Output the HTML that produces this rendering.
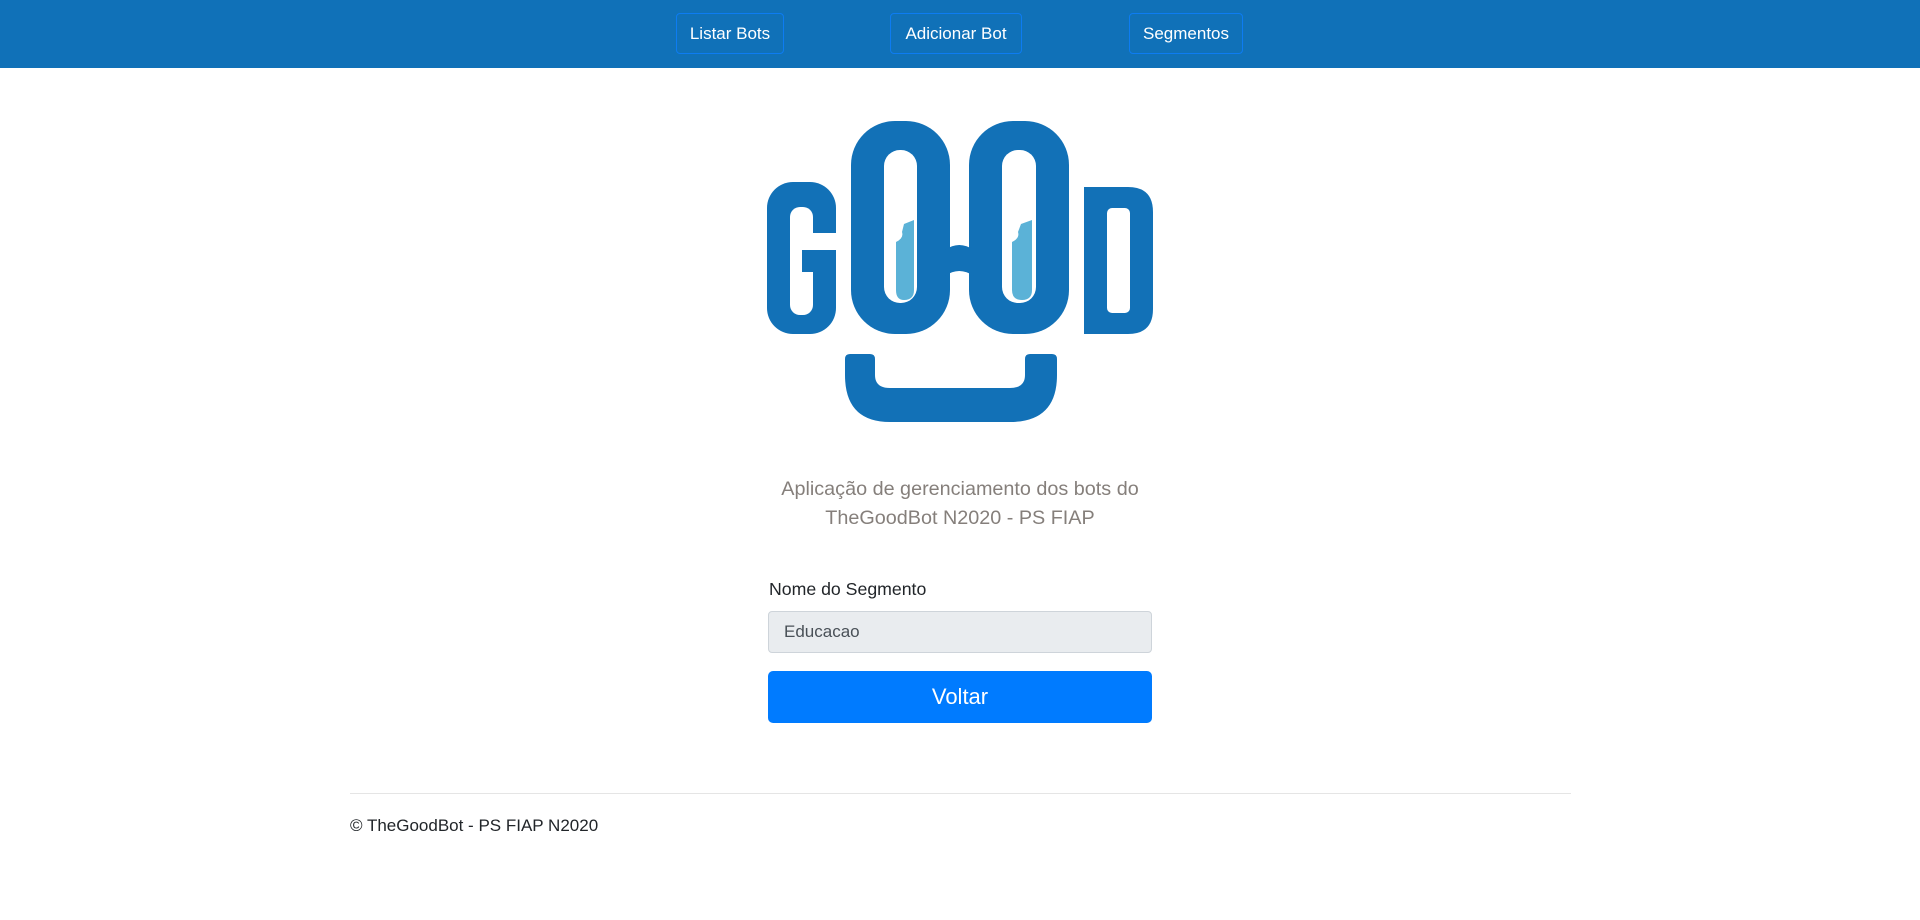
<!DOCTYPE html>
<html><head><meta charset="utf-8"><style>
body{margin:0;width:1920px;height:920px;background:#fff;font-family:"Liberation Sans",sans-serif;position:relative;overflow:hidden}
.nav{position:absolute;left:0;top:0;width:1920px;height:68px;background:#1071b8}
.nb{position:absolute;top:13px;height:41px;border:1px solid #0d7cf2;border-radius:4px;box-sizing:border-box;color:#fff;font-size:17px;line-height:39px;text-align:center;white-space:nowrap}
.abs{position:absolute}
</style></head><body>
<div class="nav">
<div class="nb" style="left:676px;width:108px">Listar Bots</div>
<div class="nb" style="left:890px;width:132px">Adicionar Bot</div>
<div class="nb" style="left:1129px;width:114px">Segmentos</div>
</div>
<svg class="abs" style="left:740px;top:100px" width="440" height="340" viewBox="0 0 440 340">
<g fill="#1271b7">
<rect x="27" y="82" width="69" height="152" rx="26"/>
<rect x="111" y="21" width="99" height="213" rx="44"/>
<rect x="229" y="21" width="100" height="213" rx="44"/>
<path d="M205 150 Q219 140 234 150 L234 176 Q219 166 205 176Z"/>
<path d="M344 87 H388 Q413 87 413 112 V209 Q413 234 388 234 H344Z"/>
<path d="M110 254 H130 Q135 254 135 259 V275 Q135 288 150 288 H270 Q285 288 285 275 V259 Q285 254 290 254 H312 Q317 254 317 259 V275 Q317 322 270 322 H150 Q105 322 105 275 V259 Q105 254 110 254Z"/>
</g>
<g fill="#fff">
<rect x="50" y="107" width="23" height="108" rx="10"/>
<rect x="72" y="133" width="25" height="17"/>
<rect x="144" y="50" width="33" height="153" rx="16"/>
<rect x="262" y="50" width="34" height="153" rx="16"/>
<rect x="367" y="108" width="23" height="105" rx="5"/>
</g>
<rect x="62" y="150" width="12" height="22" fill="#1271b7"/>
<g fill="#5bb2d7">
<path d="M156 142 Q164 138 162 132 L164 124 L174 120 V190 Q174 200 164 200 Q156 200 156 190Z"/>
<path d="M272 142 Q280 138 278 132 L281 124 L292 120 V190 Q292 200 282 200 Q272 200 272 190Z"/>
</g>
</svg>
<div class="abs" style="left:730px;width:460px;top:475px;text-align:center;color:#857f7b;font-size:19.8px;line-height:29px">Aplicação de gerenciamento dos bots do<br>TheGoodBot N2020 - PS FIAP</div>
<div class="abs" style="left:769px;top:579px;font-size:17.7px;color:#212529">Nome do Segmento</div>
<div class="abs" style="left:768px;top:611px;width:384px;height:42px;box-sizing:border-box;background:#e9ecef;border:1px solid #ced4da;border-radius:4px;padding-left:15px;line-height:40px;font-size:17px;color:#495057">Educacao</div>
<div class="abs" style="left:768px;top:671px;width:384px;height:52px;background:#007bff;border-radius:5px;color:#fff;font-size:22px;line-height:52px;text-align:center">Voltar</div>
<div class="abs" style="left:350px;top:793px;width:1221px;height:1px;background:#e5e5e5"></div>
<div class="abs" style="left:350px;top:816px;font-size:17px;color:#212529">© TheGoodBot - PS FIAP N2020</div>
</body></html>
